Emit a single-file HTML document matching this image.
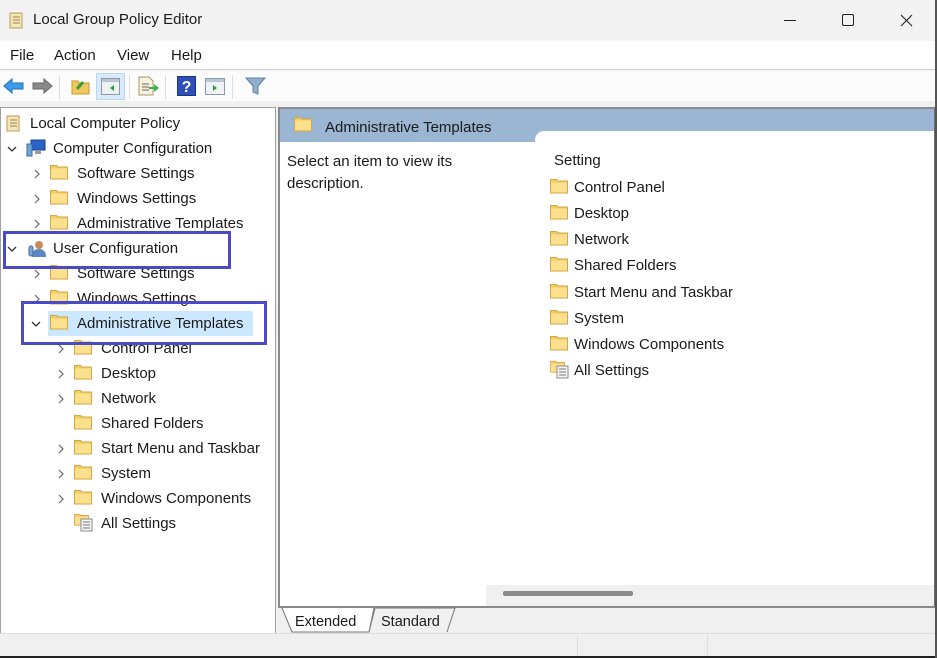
<!DOCTYPE html>
<html><head><meta charset="utf-8"><style>
*{margin:0;padding:0;box-sizing:border-box}
body{width:937px;height:658px;overflow:hidden;background:#f0f0f0;font-family:"Liberation Sans",sans-serif;font-size:15px;color:#1a1a1a;position:relative}
.a{position:absolute;white-space:nowrap}
.t{position:absolute;white-space:nowrap;line-height:18px}
.fold{position:absolute;width:18px;height:16px}
.chev{position:absolute;width:10px;height:10px}
</style></head><body>
<svg width="0" height="0" style="position:absolute">
<defs>
<symbol id="f" viewBox="0 0 18 16"><path d="M0.5 1.5h6l1.5 1.5h9.5v12h-17z" fill="#f2cc63" stroke="#d4a640" stroke-width="1"/><path d="M1 4.5h16v10h-16z" fill="#fbe08e"/></symbol>
<symbol id="cr" viewBox="0 0 10 10"><path d="M3 1l4 4-4 4" fill="none" stroke="#666" stroke-width="1.2"/></symbol>
<symbol id="cd" viewBox="0 0 10 10"><path d="M1 3l4 4 4-4" fill="none" stroke="#333" stroke-width="1.3"/></symbol>
</defs></svg>

<div class="a" style="left:0;top:0;width:937px;height:41px;background:#f3f3f3"></div>
<svg class="a" style="left:7px;top:11px" width="18" height="19"><rect x="3" y="2" width="12" height="15" fill="#f4e6b8" stroke="#b79c5a"/><path d="M6 6h7M6 9h7M6 12h7" stroke="#9c8350"/></svg>
<div class="t" style="left:33px;top:11px">Local Group Policy Editor</div>
<div class="a" style="left:784px;top:20px;width:12px;height:1px;background:#222"></div>
<div class="a" style="left:842px;top:14px;width:12px;height:12px;border:1px solid #222;border-radius:2px"></div>
<svg class="a" style="left:900px;top:14px" width="13" height="13"><path d="M1 1l11 11M12 1L1 12" stroke="#222" stroke-width="1.1"/></svg>

<div class="a" style="left:0;top:41px;width:937px;height:29px;background:#fff;border-bottom:1px solid #d5d5d5"></div>
<div class="t" style="left:10px;top:47px">File</div>
<div class="t" style="left:54px;top:47px">Action</div>
<div class="t" style="left:117px;top:47px">View</div>
<div class="t" style="left:171px;top:47px">Help</div>

<div class="a" style="left:0;top:71px;width:937px;height:30px;background:#fcfcfc"></div>
<svg class="a" style="left:3px;top:77px" width="22" height="18"><path d="M1 9l8-7v4h11v6H9v4z" fill="#3d9be9" stroke="#1f6fb8"/></svg>
<svg class="a" style="left:31px;top:77px" width="22" height="18"><path d="M21 9l-8-7v4H2v6h11v4z" fill="#8a8a8a" stroke="#666"/></svg>
<div class="a" style="left:59px;top:75px;width:1px;height:24px;background:#ddd"></div>
<svg class="a" style="left:71px;top:77px" width="20" height="18"><path d="M1 4h6l1 2h10v11H1z" fill="#f0c860" stroke="#c99a33"/><path d="M6 12l6-7" stroke="#3a9a3a" stroke-width="3"/></svg>
<div class="a" style="left:96px;top:73px;width:29px;height:27px;background:#d9ebfa;border:1px solid #b9d7f3"></div>
<svg class="a" style="left:101px;top:78px" width="19" height="17"><rect x="0.5" y="0.5" width="18" height="16" fill="#eef2f5" stroke="#8a9aa8"/><rect x="1" y="1" width="17" height="3" fill="#b9c6d2"/><path d="M13 7l-4 3 4 3z" fill="#2e9a3a"/></svg>
<div class="a" style="left:129px;top:75px;width:1px;height:24px;background:#ddd"></div>
<svg class="a" style="left:138px;top:76px" width="22" height="20"><path d="M1 1h10l4 4v14H1z" fill="#f7f2dc" stroke="#a59a70"/><path d="M4 8h7M4 11h7M4 14h7" stroke="#666"/><path d="M11 11h5v-3l5 4-5 4v-3h-5z" fill="#3cb04a"/></svg>
<div class="a" style="left:165px;top:75px;width:1px;height:24px;background:#ddd"></div>
<svg class="a" style="left:177px;top:76px" width="19" height="20"><rect x="0.5" y="0.5" width="18" height="19" fill="#2d4fb7" stroke="#1b3385"/><text x="9.5" y="16" font-size="16" font-weight="bold" fill="#fff" text-anchor="middle" font-family="Liberation Sans">?</text></svg>
<svg class="a" style="left:205px;top:78px" width="20" height="17"><rect x="0.5" y="0.5" width="19" height="16" fill="#eef2f5" stroke="#8a9aa8"/><rect x="1" y="1" width="18" height="3" fill="#b9c6d2"/><path d="M8 7l4 3-4 3z" fill="#2e9a3a"/></svg>
<div class="a" style="left:232px;top:75px;width:1px;height:24px;background:#ddd"></div>
<svg class="a" style="left:245px;top:77px" width="21" height="19"><path d="M1 1h19l-7 8v8l-5-2V9z" fill="#8fb0cc" stroke="#5f7f9b"/></svg>

<div class="a" style="left:0;top:107px;width:276px;height:527px;background:#fff;border:1px solid #a0a0a0"></div>
<svg class="a" style="left:4px;top:114px" width="18" height="19"><rect x="3" y="2" width="12" height="15" fill="#f4e6b8" stroke="#b79c5a"/><path d="M6 6h7M6 9h7M6 12h7" stroke="#9c8350"/></svg>
<div class="t" style="left:30px;top:115px">Local Computer Policy</div>
<svg class="chev" style="left:7px;top:144px"><use href="#cd"/></svg>
<svg class="a" style="left:26px;top:139px" width="20" height="19"><rect x="5" y="1" width="14" height="10" fill="#2a62c8" stroke="#1a3f88"/><rect x="1" y="5" width="5" height="12" fill="#6ea6d9" stroke="#3a6a99"/><path d="M9 12h6v3H9z" fill="#999"/></svg>
<div class="t" style="left:53px;top:140px">Computer Configuration</div>

<svg class="chev" style="left:32px;top:169px"><use href="#cr"/></svg><svg class="fold" style="left:50px;top:164px"><use href="#f"/></svg><div class="t" style="left:77px;top:165px">Software Settings</div>
<svg class="chev" style="left:32px;top:194px"><use href="#cr"/></svg><svg class="fold" style="left:50px;top:189px"><use href="#f"/></svg><div class="t" style="left:77px;top:190px">Windows Settings</div>
<svg class="chev" style="left:32px;top:219px"><use href="#cr"/></svg><svg class="fold" style="left:50px;top:214px"><use href="#f"/></svg><div class="t" style="left:77px;top:215px">Administrative Templates</div>

<svg class="chev" style="left:7px;top:244px"><use href="#cd"/></svg>
<svg class="a" style="left:27px;top:239px" width="20" height="19"><circle cx="12" cy="6" r="4" fill="#c98a58"/><path d="M5 18c0-6 3-8 7-8s7 2 7 8z" fill="#5a87c4"/><rect x="2" y="7" width="4" height="10" rx="2" fill="#7aa8d8" stroke="#3f6a9c"/></svg>
<div class="t" style="left:53px;top:240px">User Configuration</div>

<svg class="chev" style="left:32px;top:269px"><use href="#cr"/></svg><svg class="fold" style="left:50px;top:264px"><use href="#f"/></svg><div class="t" style="left:77px;top:265px">Software Settings</div>
<svg class="chev" style="left:32px;top:294px"><use href="#cr"/></svg><svg class="fold" style="left:50px;top:289px"><use href="#f"/></svg><div class="t" style="left:77px;top:290px">Windows Settings</div>
<div class="a" style="left:48px;top:311px;width:205px;height:25px;background:#cce8ff"></div>
<svg class="chev" style="left:31px;top:319px"><use href="#cd"/></svg><svg class="fold" style="left:50px;top:314px"><use href="#f"/></svg><div class="t" style="left:77px;top:315px">Administrative Templates</div>

<svg class="chev" style="left:56px;top:344px"><use href="#cr"/></svg><svg class="fold" style="left:74px;top:339px"><use href="#f"/></svg><div class="t" style="left:101px;top:340px">Control Panel</div>
<svg class="chev" style="left:56px;top:369px"><use href="#cr"/></svg><svg class="fold" style="left:74px;top:364px"><use href="#f"/></svg><div class="t" style="left:101px;top:365px">Desktop</div>
<svg class="chev" style="left:56px;top:394px"><use href="#cr"/></svg><svg class="fold" style="left:74px;top:389px"><use href="#f"/></svg><div class="t" style="left:101px;top:390px">Network</div>
<svg class="fold" style="left:74px;top:414px"><use href="#f"/></svg><div class="t" style="left:101px;top:415px">Shared Folders</div>
<svg class="chev" style="left:56px;top:444px"><use href="#cr"/></svg><svg class="fold" style="left:74px;top:439px"><use href="#f"/></svg><div class="t" style="left:101px;top:440px">Start Menu and Taskbar</div>
<svg class="chev" style="left:56px;top:469px"><use href="#cr"/></svg><svg class="fold" style="left:74px;top:464px"><use href="#f"/></svg><div class="t" style="left:101px;top:465px">System</div>
<svg class="chev" style="left:56px;top:494px"><use href="#cr"/></svg><svg class="fold" style="left:74px;top:489px"><use href="#f"/></svg><div class="t" style="left:101px;top:490px">Windows Components</div>
<svg class="a" style="left:74px;top:513px" width="20" height="19"><use href="#f" width="15" height="13"/><rect x="7" y="6" width="11" height="12" fill="#f5f5f5" stroke="#888"/><path d="M9 9h7M9 12h7M9 15h7" stroke="#777"/></svg><div class="t" style="left:101px;top:515px">All Settings</div>

<div class="a" style="left:3px;top:231px;width:228px;height:38px;border:3px solid #4a4ac6"></div>
<div class="a" style="left:21px;top:301px;width:246px;height:44px;border:3px solid #4a4ac6"></div>

<div class="a" style="left:278px;top:107px;width:658px;height:501px;background:#fff;border:2px solid #8a8a8a;border-right-color:#707070"></div>
<div class="a" style="left:280px;top:109px;width:654px;height:33px;background:#9ab6d3"></div>
<div class="a" style="left:535px;top:131px;width:399px;height:11px;background:#fff;border-top-left-radius:9px"></div>
<svg class="fold" style="left:294px;top:116px"><use href="#f"/></svg>
<div class="t" style="left:325px;top:119px">Administrative Templates</div>
<div class="t" style="left:287px;top:153px">Select an item to view its</div>
<div class="t" style="left:287px;top:175px">description.</div>
<div class="t" style="left:554px;top:152px">Setting</div>
<svg class="fold" style="left:550px;top:178px"><use href="#f"/></svg><div class="t" style="left:574px;top:179px">Control Panel</div>
<svg class="fold" style="left:550px;top:204px"><use href="#f"/></svg><div class="t" style="left:574px;top:205px">Desktop</div>
<svg class="fold" style="left:550px;top:230px"><use href="#f"/></svg><div class="t" style="left:574px;top:231px">Network</div>
<svg class="fold" style="left:550px;top:256px"><use href="#f"/></svg><div class="t" style="left:574px;top:257px">Shared Folders</div>
<svg class="fold" style="left:550px;top:283px"><use href="#f"/></svg><div class="t" style="left:574px;top:284px">Start Menu and Taskbar</div>
<svg class="fold" style="left:550px;top:309px"><use href="#f"/></svg><div class="t" style="left:574px;top:310px">System</div>
<svg class="fold" style="left:550px;top:335px"><use href="#f"/></svg><div class="t" style="left:574px;top:336px">Windows Components</div>
<svg class="a" style="left:550px;top:360px" width="20" height="19"><use href="#f" width="15" height="13"/><rect x="7" y="6" width="11" height="12" fill="#f5f5f5" stroke="#888"/><path d="M9 9h7M9 12h7M9 15h7" stroke="#777"/></svg><div class="t" style="left:574px;top:362px">All Settings</div>
<div class="a" style="left:486px;top:585px;width:448px;height:21px;background:#f0f0f0"></div>
<div class="a" style="left:503px;top:591px;width:130px;height:5px;background:#8a8a8a;border-radius:2px"></div>

<svg class="a" style="left:280px;top:607px" width="180" height="26"><path d="M2 1l10 24h77l5-24" fill="#fff" stroke="#777"/><path d="M89 25l6-24h80l-8 24" fill="#f0f0f0" stroke="#777"/></svg>
<div class="t" style="left:295px;top:613px;font-size:14.5px">Extended</div>
<div class="t" style="left:381px;top:613px;font-size:14.5px">Standard</div>

<div class="a" style="left:0;top:633px;width:937px;height:1px;background:#ddd"></div>
<div class="a" style="left:577px;top:635px;width:1px;height:21px;background:#ddd"></div>
<div class="a" style="left:707px;top:635px;width:1px;height:21px;background:#ddd"></div>
<div class="a" style="left:0;top:656px;width:937px;height:2px;background:#222"></div>
<div class="a" style="left:935px;top:0;width:2px;height:658px;background:#555"></div>
</body></html>
